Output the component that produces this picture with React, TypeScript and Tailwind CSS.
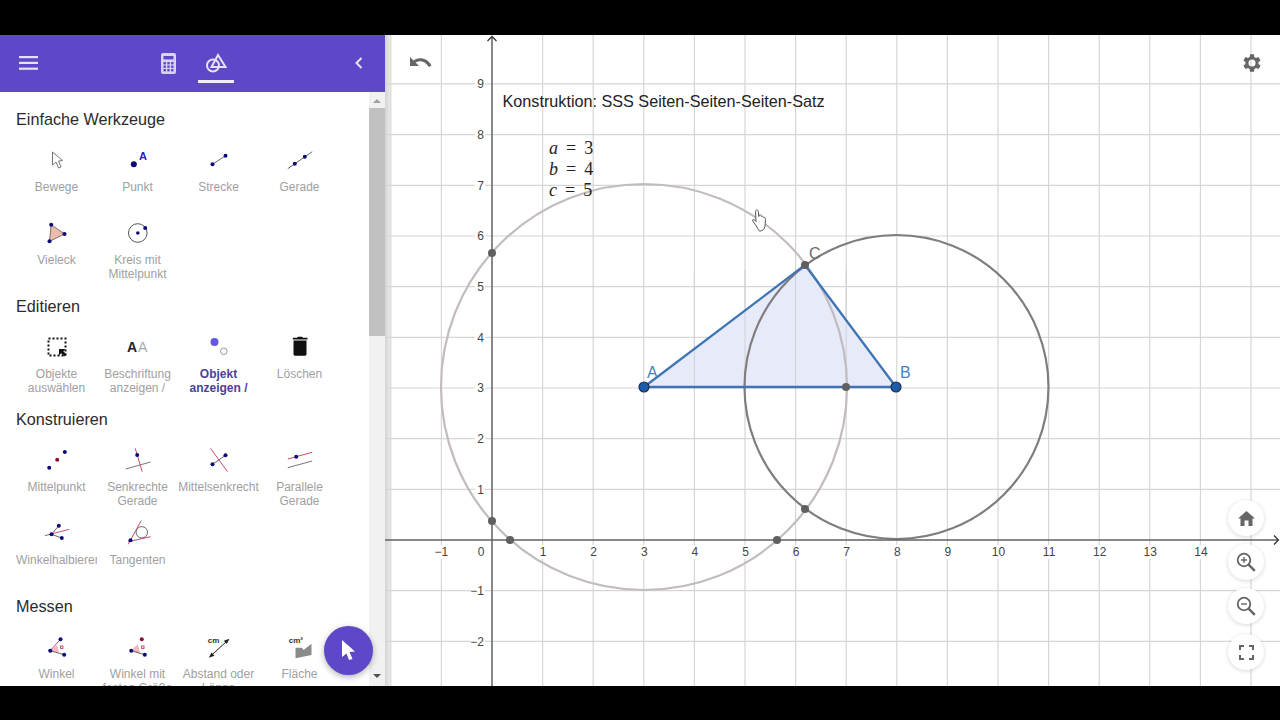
import React from 'react';

const NAVY = '#0b0b78';
const RED = '#c2506a';

function ToolIcon({ name }: { name: string }) {
    const svg = (children: React.ReactNode) => (
        <svg width="32" height="32" viewBox="0 0 32 32" fill="none">{children}</svg>
    );
    switch (name) {
        case 'move':
            return svg(<path d="M11.5 8 L11.5 21 L15 18 L17.5 24 L20 23 L17.5 17 L21.5 16.5 Z" fill="#fff" stroke="#777" strokeWidth="1" />);
        case 'point':
            return svg(<>
                <circle cx="11.8" cy="20.3" r="3" fill={NAVY} />
                <text x="17" y="16" fontSize="11" fontWeight="700" fill="#2a22b8">A</text>
            </>);
        case 'segment':
            return svg(<>
                <path d="M9.5 20.3 L22.5 11.7" stroke="#666" strokeWidth="1" />
                <circle cx="9.5" cy="20.3" r="2" fill={NAVY} /><circle cx="22.5" cy="11.7" r="2" fill={NAVY} />
            </>);
        case 'line':
            return svg(<>
                <path d="M3.8 24.7 L28.2 7.7" stroke="#666" strokeWidth="1" />
                <circle cx="10.8" cy="19.7" r="2" fill={NAVY} /><circle cx="20.8" cy="12.7" r="2" fill={NAVY} />
            </>);
        case 'polygon':
            return svg(<>
                <path d="M10.2 7.7 L23.5 17 L8.5 24.3 Z" fill="#e8bcb0" stroke="#8a6a66" strokeWidth="1" />
                <circle cx="10.2" cy="7.7" r="2" fill={NAVY} /><circle cx="23.5" cy="17" r="2" fill={NAVY} /><circle cx="8.5" cy="24.3" r="2" fill={NAVY} />
            </>);
        case 'circle':
            return svg(<>
                <circle cx="15.8" cy="16" r="9.3" stroke="#555" strokeWidth="1" />
                <circle cx="15.8" cy="16" r="1.8" fill={NAVY} /><circle cx="23.2" cy="11" r="2" fill={NAVY} />
            </>);
        case 'select':
            return svg(<>
                <rect x="7.5" y="7.5" width="17" height="17" stroke="#111" strokeWidth="2" strokeDasharray="2 2" />
                <path d="M18 24.5 L18 18 L24.5 18 L22.3 20.2 L25.5 23.4 L23.4 25.5 L20.2 22.3 Z" fill="#111" />
            </>);
        case 'label':
            return svg(<>
                <text x="5" y="20.7" fontSize="14" fontWeight="700" fill="#222">A</text>
                <text x="16" y="20.7" fontSize="14" fill="#aaa">A</text>
            </>);
        case 'show':
            return svg(<>
                <circle cx="11.5" cy="11" r="4" fill="#6557e0" />
                <circle cx="20.8" cy="20.3" r="3.3" fill="#fff" stroke="#999" strokeWidth="1" />
            </>);
        case 'delete':
            return svg(<>
                <path d="M9.5 9.5 H22.5 V23 C22.5 24 21.8 24.7 21 24.7 H11 C10.2 24.7 9.5 24 9.5 23 Z" fill="#111" />
                <path d="M8.8 6.8 H13 L14 5.7 H18 L19 6.8 H23.5 V8.6 H8.8 Z" fill="#111" />
            </>);
        case 'midpoint':
            return svg(<>
                <circle cx="8.2" cy="23.7" r="2" fill={NAVY} /><circle cx="16.2" cy="15.7" r="2" fill="#8a1030" /><circle cx="23.8" cy="8" r="2" fill={NAVY} />
            </>);
        case 'perp':
            return svg(<>
                <path d="M3.8 25 L28.5 18" stroke="#777" strokeWidth="1" />
                <path d="M13.2 4.3 L20.2 27.7" stroke={RED} strokeWidth="1" />
                <circle cx="15.2" cy="11" r="2" fill={NAVY} />
            </>);
        case 'bisector':
            return svg(<>
                <path d="M7.5 4.3 L24.5 27.7" stroke={RED} strokeWidth="1" />
                <path d="M9.5 20.3 L22.5 11.3" stroke="#666" strokeWidth="1" />
                <circle cx="9.5" cy="20.3" r="2" fill={NAVY} /><circle cx="22.5" cy="11.3" r="2" fill={NAVY} />
            </>);
        case 'parallel':
            return svg(<>
                <path d="M3.8 15 L28.2 8.3" stroke={RED} strokeWidth="1" />
                <path d="M3.8 23.7 L28.2 17" stroke="#777" strokeWidth="1" />
                <circle cx="12.2" cy="12.7" r="2" fill={NAVY} />
            </>);
        case 'anglebis':
            return svg(<>
                <path d="M3.8 18.7 L28.2 12.3" stroke={RED} strokeWidth="1" />
                <path d="M10.5 17.3 L17.8 8.7 M10.5 17.3 L20.8 21" stroke="#666" strokeWidth="1" />
                <circle cx="10.5" cy="17.3" r="2" fill={NAVY} /><circle cx="17.8" cy="8.7" r="2" fill={NAVY} /><circle cx="20.8" cy="21" r="2" fill={NAVY} />
            </>);
        case 'tangent':
            return svg(<>
                <path d="M6.2 27.3 L19.2 3.7 M6.2 24.7 L28.5 19.7" stroke={RED} strokeWidth="1" />
                <circle cx="19.8" cy="15.3" r="5.7" stroke="#666" strokeWidth="1" fill="#fff" />
                <circle cx="8.5" cy="23.3" r="2" fill={NAVY} />
            </>);
        case 'angle':
            return svg(<>
                <path d="M9.2 19.7 L16.2 14 L18 21.7 Z" fill="#f5b8c4" />
                <path d="M9.2 19.7 L19.5 8.3" stroke={RED} strokeWidth="1" />
                <path d="M9.2 19.7 L23.2 23.7" stroke="#666" strokeWidth="1" />
                <rect x="19.5" y="15" width="2.4" height="2.4" stroke={RED} strokeWidth="1" />
                <circle cx="9.2" cy="19.7" r="2" fill={NAVY} /><circle cx="19.5" cy="8.3" r="2" fill={NAVY} /><circle cx="23.2" cy="23.7" r="2" fill={NAVY} />
            </>);
        case 'anglefixed':
            return svg(<>
                <path d="M9.2 19.7 L15.5 14 L17.5 21.7 Z" fill="#f5b8c4" stroke="#d98" strokeWidth="0.5" />
                <path d="M9.2 19.7 L22.8 23.7" stroke="#666" strokeWidth="1" />
                <rect x="19.6" y="15" width="2.4" height="2.4" stroke={RED} strokeWidth="1" />
                <circle cx="9.2" cy="19.7" r="2" fill={NAVY} /><circle cx="19.8" cy="8.3" r="2" fill="#8a1030" /><circle cx="22.8" cy="23.7" r="2" fill={NAVY} />
            </>);
        case 'distance':
            return svg(<>
                <text x="4.8" y="11.7" fontSize="8" fontWeight="700" fill="#333">cm</text>
                <path d="M7 25.6 L25.4 8.8" stroke="#222" strokeWidth="1" />
                <path d="M5.8 26.7 L11.5 24.7 L8.5 21.5 Z M26.5 7.7 L20.8 9.7 L23.8 12.9 Z" fill="#222" />
            </>);
        case 'area':
            return svg(<>
                <text x="4.8" y="11.7" fontSize="8" fontWeight="700" fill="#333">cm²</text>
                <path d="M11.5 16.7 L18 16.7 L19.5 19 L27.5 12.7 V24 L11.5 27.3 Z" fill="#8a8a8a" />
            </>);
        default:
            return null;
    }
}

type Tool = { icon: string; label: string; selected?: boolean };

const sections: { title: string; className: string; tools: Tool[] }[] = [
    {
        title: 'Einfache Werkzeuge',
        className: 'mt-[17px]',
        tools: [
            { icon: 'move', label: 'Bewege' },
            { icon: 'point', label: 'Punkt' },
            { icon: 'segment', label: 'Strecke' },
            { icon: 'line', label: 'Gerade' },
            { icon: 'polygon', label: 'Vieleck' },
            { icon: 'circle', label: 'Kreis mit Mittelpunkt' },
        ],
    },
    {
        title: 'Editieren',
        className: 'mt-[6px]',
        tools: [
            { icon: 'select', label: 'Objekte auswählen' },
            { icon: 'label', label: 'Beschriftung anzeigen /' },
            { icon: 'show', label: 'Objekt anzeigen /', selected: true },
            { icon: 'delete', label: 'Löschen' },
        ],
    },
    {
        title: 'Konstruieren',
        className: 'mt-[5px]',
        tools: [
            { icon: 'midpoint', label: 'Mittelpunkt' },
            { icon: 'perp', label: 'Senkrechte Gerade' },
            { icon: 'bisector', label: 'Mittelsenkrecht' },
            { icon: 'parallel', label: 'Parallele Gerade' },
            { icon: 'anglebis', label: 'Winkelhalbierende' },
            { icon: 'tangent', label: 'Tangenten' },
        ],
    },
    {
        title: 'Messen',
        className: 'mt-[6px]',
        tools: [
            { icon: 'angle', label: 'Winkel' },
            { icon: 'anglefixed', label: 'Winkel mit festen Größe' },
            { icon: 'distance', label: 'Abstand oder Länge' },
            { icon: 'area', label: 'Fläche' },
        ],
    },
];

function ToolTile({ tool }: { tool: Tool }) {
    const noWrap = tool.label === 'Winkelhalbierende';
    return (
        <div className="flex h-[73px] w-[81px] flex-col items-center overflow-hidden">
            <div className="flex h-8 w-8 shrink-0 items-center justify-center">
                <ToolIcon name={tool.icon} />
            </div>
            <div
                className={
                    tool.selected
                        ? 'mt-1 text-center text-[12px] leading-[14px] font-bold text-[#4b3f9e]'
                        : noWrap
                            ? 'mt-1 w-full overflow-hidden text-left text-[12px] leading-[14px] whitespace-nowrap text-[#a0a0a0]'
                            : 'mt-1 text-center text-[12px] leading-[14px] text-[#a0a0a0]'
                }
            >
                {tool.label}
            </div>
        </div>
    );
}

function Header() {
    return (
        <div className="flex h-[57px] shrink-0 items-center bg-[#5f48c8] pr-[22px] pl-[19px]">
            <svg width="19" height="14" viewBox="0 0 19 14" fill="#e6e1f8" className="mb-[1px]">
                <rect width="19" height="2.2" /><rect y="5.8" width="19" height="2.2" /><rect y="11.6" width="19" height="2.2" />
            </svg>
            <div className="ml-[122px] flex w-[16px] items-center justify-center">
                <svg width="15" height="21" viewBox="0 0 15 21">
                    <rect width="15" height="21" rx="2" fill="#d9d2f5" />
                    <rect x="2.5" y="3" width="10" height="3.4" fill="#5f48c8" />
                    {[9, 12.5, 16].map((y) => [2.5, 6.3, 10.1].map((x) => (
                        <rect key={`${x}-${y}`} x={x} y={y} width="2.4" height="2.4" fill="#5f48c8" />
                    )))}
                </svg>
            </div>
            <div className="relative ml-[22px] flex h-[57px] w-[36px] items-center justify-center">
                <svg width="22" height="20" viewBox="0 0 22 20" fill="none" stroke="#e6e1f8" strokeWidth="2" className="mb-[1px]">
                    <path d="M13 2 L20.5 14 H6.5 Z" />
                    <circle cx="8" cy="12.5" r="6" />
                </svg>
                <div className="absolute right-0 bottom-[9px] left-0 h-[3px] bg-[#f1eefb]" />
            </div>
            <svg className="mb-[1px] ml-auto" width="8" height="12" viewBox="0 0 8 12" fill="none" stroke="#e6e1f8" strokeWidth="2">
                <path d="M6.5 1 L1.5 6 L6.5 11" />
            </svg>
        </div>
    );
}

function Scrollbar() {
    return (
        <div className="flex w-4 shrink-0 flex-col items-center bg-[#f1f1f1]">
            <div className="flex h-4 items-center justify-center pt-[2px]">
                <div className="h-0 w-0 border-x-[4px] border-b-[4px] border-x-transparent border-b-[#a0a0a0]" />
            </div>
            <div className="h-[228px] w-full bg-[#c1c1c1]" />
            <div className="flex-1" />
            <div className="flex h-4 items-center justify-center pb-[4px]">
                <div className="h-0 w-0 border-x-[4px] border-t-[4px] border-x-transparent border-t-[#505050]" />
            </div>
        </div>
    );
}

function Sidebar() {
    return (
        <aside className="relative flex w-[385px] shrink-0 flex-col bg-white">
            <Header />
            <div className="flex min-h-0 flex-1">
                <div className="min-w-0 flex-1 overflow-hidden pl-4">
                    {sections.map((s) => (
                        <section key={s.title} className={s.className}>
                            <h2 className="h-5 text-[16.2px] leading-[20px] font-normal text-[#2b2b2b]">{s.title}</h2>
                            <div className="mt-[15px] grid grid-cols-[repeat(4,81px)]">
                                {s.tools.map((t) => <ToolTile key={t.label} tool={t} />)}
                            </div>
                        </section>
                    ))}
                </div>
                <Scrollbar />
            </div>
            <button className="absolute top-[590.5px] left-[323.5px] flex h-[49px] w-[49px] items-center justify-center rounded-full bg-[#5f48c8] shadow-[0_2px_6px_rgba(0,0,0,0.3)]">
                <svg width="16" height="22" viewBox="0 0 16 22" fill="#fff">
                    <path d="M2 1 L15 12.5 L9.5 13 L12.5 20 L9 21 L6.5 14.5 L2 18 Z" />
                </svg>
            </button>
        </aside>
    );
}

const X0 = 492;
const Y0 = 540;
const UX = 50.6;
const UY = 50.67;
const px = (u: number) => X0 + u * UX;
const py = (u: number) => Y0 - u * UY;

const xLabels = [-1, 1, 2, 3, 4, 5, 6, 7, 8, 9, 10, 11, 12, 13, 14];
const yLabels = [-2, -1, 1, 2, 3, 4, 5, 6, 7, 8, 9];
const fmt = (n: number) => (n < 0 ? `\u2212${-n}` : `${n}`);

function Plot() {
    const vLines = Array.from({ length: 20 }, (_, i) => i - 2);
    const hLines = Array.from({ length: 13 }, (_, i) => i - 2);
    const A = { x: 644, y: 387 };
    const B = { x: 896, y: 387 };
    const C = { x: 805, y: 265 };
    const grayDots = [[492, 253], [492, 521], [510, 540], [777, 540], [805, 509], [846, 387], [805, 265]];
    return (
        <svg width="895" height="651" viewBox="385 35 895 651" className="relative block">
            {vLines.map((u) => u !== 0 && <line key={u} x1={px(u)} x2={px(u)} y1="35" y2="686" stroke="#d6d6d6" strokeWidth="1.2" />)}
            {hLines.map((u) => u !== 0 && <line key={u} x1="385" x2="1280" y1={py(u)} y2={py(u)} stroke="#d6d6d6" strokeWidth="1.2" />)}

            <path d={`M${A.x} ${A.y} L${B.x} ${B.y} L${C.x} ${C.y} Z`} fill="#e7eaf8" />
            {vLines.map((u) => px(u) > 644 && px(u) < 896 && <line key={u} x1={px(u)} x2={px(u)} y1="270" y2="387" stroke="#cfd0d8" strokeWidth="1" />)}

            <circle cx="644" cy="387" r="203" fill="none" stroke="#c2bcc0" strokeWidth="2.2" />
            <circle cx="896.5" cy="387" r="152" fill="none" stroke="#807c80" strokeWidth="2.2" />

            <line x1="385" x2="1278" y1={Y0} y2={Y0} stroke="#606060" strokeWidth="1.5" />
            <line x1={X0} x2={X0} y1="37" y2="686" stroke="#606060" strokeWidth="1.5" />
            <path d="M487.5 41 L492 36.5 L496.5 41" fill="none" stroke="#333" strokeWidth="1.3" />
            <path d="M1274 535.5 L1278.5 540 L1274 544.5" fill="none" stroke="#333" strokeWidth="1.3" />

            {xLabels.map((n) => (
                <g key={n}>
                    <rect x={px(n) - (n >= 10 ? 8 : 5) - (n < 0 ? 4 : 0)} y="545" width={n >= 10 ? 16 : n < 0 ? 18 : 10} height="14" fill="#fff" />
                    <text x={px(n) + (n > 0 ? 0.5 : 0)} y="556" fontSize="12" textAnchor="middle" fill="#444">{fmt(n)}</text>
                </g>
            ))}
            <text x="481" y="556" fontSize="12" textAnchor="middle" fill="#444">0</text>
            {yLabels.map((n) => (
                <g key={n}>
                    <rect x={n < 0 ? 471 : 475} y={py(n) - 7} width={n < 0 ? 14 : 10} height="14" fill="#fff" />
                    <text x="484" y={py(n) + 4.5} fontSize="12" textAnchor="end" fill="#444">{fmt(n)}</text>
                </g>
            ))}

            <path d={`M${A.x} ${A.y} L${B.x} ${B.y} L${C.x} ${C.y} Z`} fill="none" stroke="#3f75b5" strokeWidth="2.3" strokeLinejoin="round" />
            {grayDots.map(([x, y]) => <circle key={`${x}-${y}`} cx={x} cy={y} r="4" fill="#606060" />)}
            <circle cx={A.x} cy={A.y} r="5" fill="#1c5cae" stroke="#1d2f4c" strokeWidth="1.2" />
            <circle cx={B.x} cy={B.y} r="5" fill="#1c5cae" stroke="#1d2f4c" strokeWidth="1.2" />

            <text x="647" y="378" fontSize="16" fill="#4a7fbc">A</text>
            <text x="900" y="378" fontSize="16" fill="#4a7fbc">B</text>
            <text x="809" y="259" fontSize="16" fill="#6a6a6a">C</text>

            <text x="502.5" y="107" fontSize="16.2" fill="#222">Konstruktion: SSS Seiten-Seiten-Seiten-Satz</text>
            <g fontFamily="'Liberation Serif', 'Times New Roman', serif" fontSize="18" fill="#222" wordSpacing="3.5">
                <text x="549" y="154"><tspan fontStyle="italic">a</tspan> = 3</text>
                <text x="549" y="175"><tspan fontStyle="italic">b</tspan> = 4</text>
                <text x="549" y="196"><tspan fontStyle="italic">c</tspan> = 5</text>
            </g>

            <path
                d="M757 227 C755 224 753 222 752.5 220 C753.5 219 755 220 756 221.5 L755.5 211.5 C755.5 209.5 758 209.5 758.3 211.5 L758.8 216.5 L759 215.5 C760 214.5 761.3 215 761.5 216.5 C762.5 215.8 763.5 216.5 763.6 217.5 C764.6 217.2 765.5 218 765.5 219.5 L765 226 C764.5 229.5 762.5 231 760 231 C758.5 231 758 229 757 227 Z"
                fill="#fff"
                stroke="#555"
                strokeWidth="1"
            />
        </svg>
    );
}

function RoundButton({ children, className }: { children: React.ReactNode; className: string }) {
    return (
        <button className={`${className} absolute right-[16px] flex h-9 w-9 items-center justify-center rounded-full bg-white shadow-[0_1px_4px_rgba(0,0,0,0.16)]`}>
            {children}
        </button>
    );
}

function Graphics() {
    return (
        <main className="relative min-w-0 flex-1 overflow-hidden bg-white">
            <div className="absolute top-0 bottom-0 left-0 w-[5px] bg-gradient-to-r from-[#d4d4d4] to-[#e8e8e8]" />
            <Plot />
            <svg className="absolute top-[21px] left-[25px]" width="22" height="13" viewBox="0 0 22 13" fill="#666">
                <path d="M0 1 L0 10 L9 10 L5.6 6.6 C9 4 15 4.6 19 11 L21.5 9.5 C17.5 2 9 0.5 3.6 4.6 Z" />
            </svg>
            <svg className="absolute top-[16px] left-[855px]" width="24" height="24" viewBox="0 0 24 24" fill="#666">
                <path d="M19.4 13a7.5 7.5 0 0 0 0-2l2.1-1.6-2-3.5-2.5 1a7.5 7.5 0 0 0-1.7-1L15 3.2h-4L10.6 5.9a7.5 7.5 0 0 0-1.7 1l-2.5-1-2 3.5L6.5 11a7.5 7.5 0 0 0 0 2l-2.1 1.6 2 3.5 2.5-1a7.5 7.5 0 0 0 1.7 1l.4 2.7h4l.4-2.7a7.5 7.5 0 0 0 1.7-1l2.5 1 2-3.5ZM13 15.5a3.5 3.5 0 1 1 0-7 3.5 3.5 0 0 1 0 7Z" transform="translate(-1 0)" />
            </svg>
            <RoundButton className="top-[465px]">
                <svg width="17" height="15" viewBox="0 0 17 15" fill="#666"><path d="M8.5 0 L17 7.5 H14.5 V15 H10.5 V9.5 H6.5 V15 H2.5 V7.5 H0 Z" /></svg>
            </RoundButton>
            <RoundButton className="top-[509px]">
                <svg width="20" height="20" viewBox="0 0 20 20" fill="none" stroke="#666" strokeWidth="1.8">
                    <circle cx="8" cy="8" r="6.3" /><path d="M12.6 12.6 L18.8 18.8" strokeWidth="2.4" /><path d="M5 8 H11 M8 5 V11" strokeWidth="1.4" />
                </svg>
            </RoundButton>
            <RoundButton className="top-[553px]">
                <svg width="20" height="20" viewBox="0 0 20 20" fill="none" stroke="#666" strokeWidth="1.8">
                    <circle cx="8" cy="8" r="6.3" /><path d="M12.6 12.6 L18.8 18.8" strokeWidth="2.4" /><path d="M5 8 H11" strokeWidth="1.4" />
                </svg>
            </RoundButton>
            <RoundButton className="top-[599px]">
                <svg width="15" height="15" viewBox="0 0 15 15" fill="none" stroke="#666" strokeWidth="2">
                    <path d="M1 5 V1 H5 M10 1 H14 V5 M14 10 V14 H10 M5 14 H1 V10" />
                </svg>
            </RoundButton>
        </main>
    );
}

export default function App() {
    return (
        <div className="flex h-[720px] w-[1280px] flex-col overflow-hidden bg-black font-['Liberation_Sans',Arial,sans-serif]">
            <div className="h-[35px] shrink-0" />
            <div className="flex h-[651px] shrink-0">
                <Sidebar />
                <Graphics />
            </div>
        </div>
    );
}
